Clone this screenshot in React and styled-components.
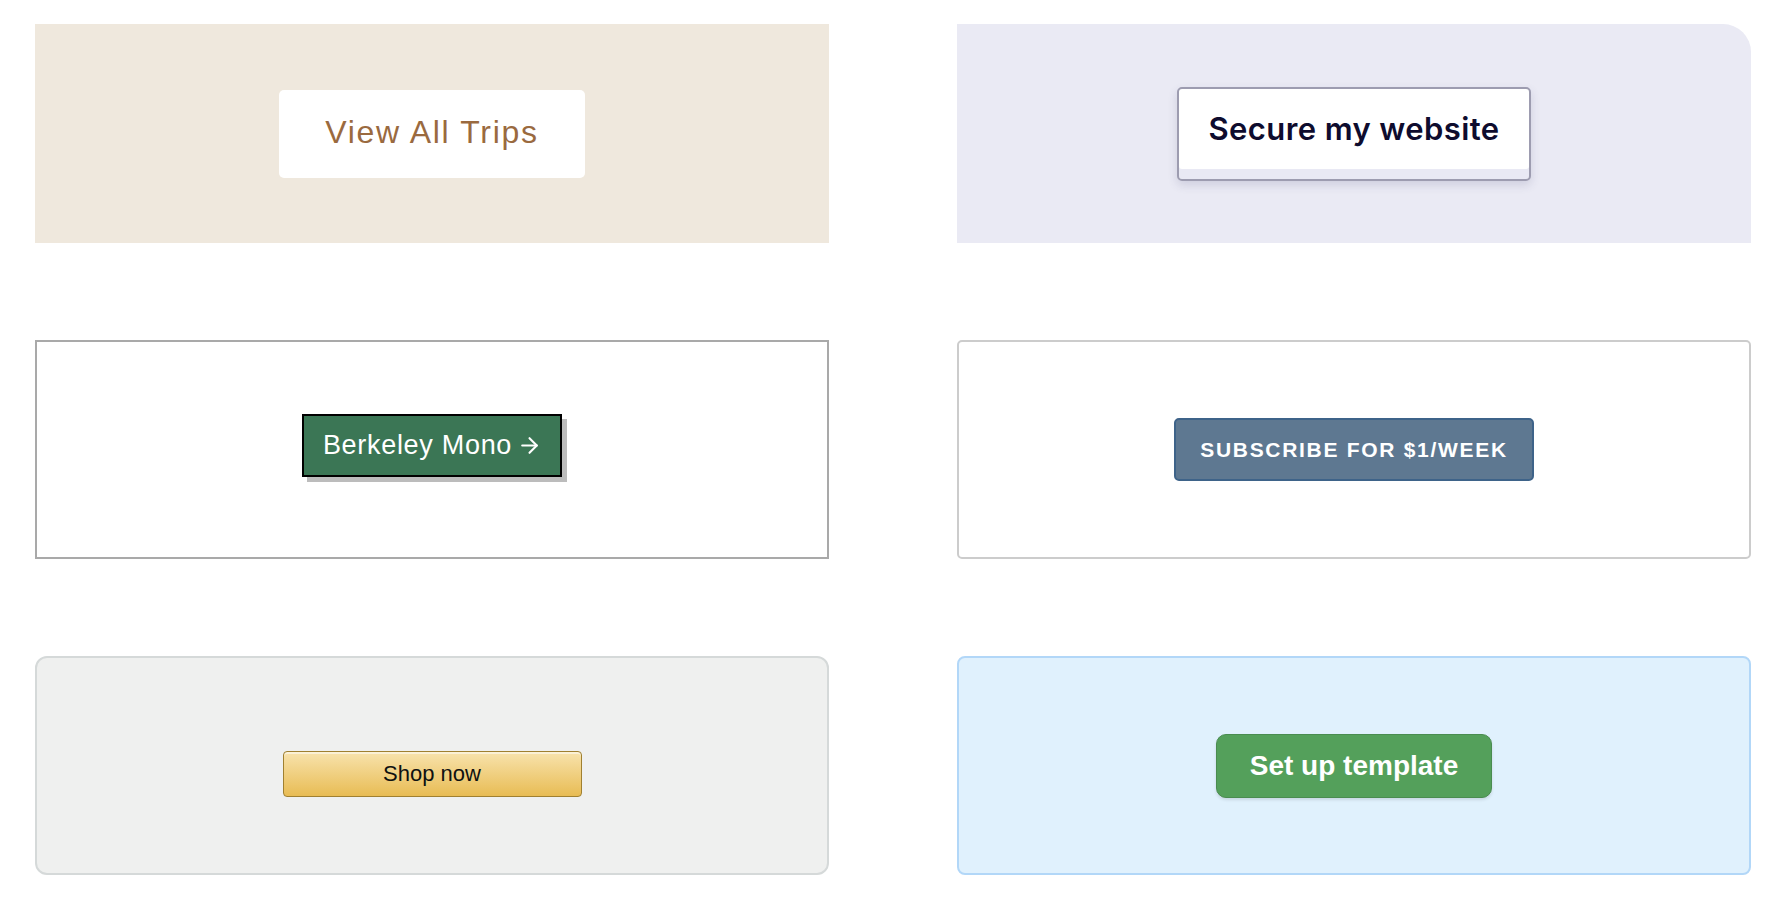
import React from 'react'
import styled, { createGlobalStyle } from 'styled-components'
import { ArrowRight } from 'lucide-react'

const GlobalStyle = createGlobalStyle`
  html, body {
    margin: 0;
    padding: 0;
    background: #fff;
  }
  body {
    font-family: 'Liberation Sans', Arial, sans-serif;
  }
`

/* Page grid */
const Page = styled.div`
  display: grid;
  grid-template-columns: 794px 794px;
  grid-auto-rows: 219px;
  column-gap: 128px;
  row-gap: 97px;
  padding: 24px 0 0 35px;
`

const Card = styled.div`
  box-sizing: border-box;
  display: flex;
  justify-content: center;
  align-items: center;
  background: ${p => p.$bg || '#fff'};
  border: ${p => p.$border ? `2px solid ${p.$border}` : 'none'};
  border-radius: ${p => p.$radius || '0'};
`

/* Buttons */
const TripsBtn = styled.button`
  font-family: 'Liberation Sans', Arial, sans-serif;
  font-size: 32px;
  line-height: 32px;
  font-weight: 400;
  letter-spacing: 1.7px;
  color: #9a6a3f;
  background: #fff;
  border: none;
  border-radius: 5px;
  padding: 26px 46px 30px;
  cursor: pointer;
`

const SecureBtn = styled.button`
  font-family: Inter, 'Liberation Sans', sans-serif;
  font-size: 31px;
  line-height: 30px;
  font-weight: 600;
  letter-spacing: 0.4px;
  color: #0e0c2e;
  background: #fff;
  border: 2px solid #9d9cb0;
  border-radius: 5px;
  padding: 25px 30px 35px;
  box-shadow: inset 0 -10px 0 #e9e9f4, 0 4px 10px rgba(60, 60, 110, 0.16);
  cursor: pointer;
`

const MonoBtn = styled.button`
  display: inline-flex;
  align-items: center;
  gap: 5px;
  font-family: 'Liberation Sans', Arial, sans-serif;
  font-size: 27px;
  line-height: 33px;
  letter-spacing: 0.7px;
  color: #fff;
  background: #3b7655;
  border: 2px solid #000;
  border-radius: 0;
  padding: 13px 18px 13px 19px;
  margin-bottom: 8px;
  box-shadow: 5px 5px 0 #bcbcbc;
  cursor: pointer;
`

const SubscribeBtn = styled.button`
  font-family: 'Liberation Sans', Arial, sans-serif;
  font-size: 21px;
  line-height: 23px;
  font-weight: 700;
  letter-spacing: 1.7px;
  text-transform: uppercase;
  color: #fff;
  background: #5e7891;
  border: 2px solid #3e6389;
  border-radius: 5px;
  padding: 18px 24px;
  cursor: pointer;
`

const ShopBtn = styled.button`
  font-family: 'Liberation Sans', Arial, sans-serif;
  font-size: 22px;
  line-height: 24px;
  color: #0f1111;
  width: 299px;
  height: 46px;
  margin-top: 16px;
  background: linear-gradient(to bottom, #f8e3ad, #e8bc54);
  border: 1px solid #a08030;
  border-radius: 4px;
  box-shadow: inset 0 2px 0 rgba(255, 255, 255, 0.5);
  cursor: pointer;
`

const TemplateBtn = styled.button`
  font-family: 'Liberation Sans', Arial, sans-serif;
  font-size: 28px;
  line-height: 32px;
  font-weight: 700;
  color: #fff;
  background: #54a05b;
  border: 1px solid #4a8c50;
  border-radius: 10px;
  padding: 15px 33px;
  box-shadow: 0 2px 3px rgba(27, 31, 35, 0.12);
  cursor: pointer;
`

const App = () => {
  return (
    <>
      <GlobalStyle />
      <Page>
        <Card $bg="#efe8dd">
          <TripsBtn>View All Trips</TripsBtn>
        </Card>
        <Card $bg="#eaeaf4" $radius="0 28px 0 0">
          <SecureBtn>Secure my website</SecureBtn>
        </Card>
        <Card $border="#a9a9a9">
          <MonoBtn>
            Berkeley Mono
            <ArrowRight size={25} strokeWidth={2} />
          </MonoBtn>
        </Card>
        <Card $border="#cccccc" $radius="5px">
          <SubscribeBtn>Subscribe for $1/week</SubscribeBtn>
        </Card>
        <Card $bg="#eff0ef" $border="#d5d9d9" $radius="12px">
          <ShopBtn>Shop now</ShopBtn>
        </Card>
        <Card $bg="#e0f1fd" $border="#b2d7f8" $radius="8px">
          <TemplateBtn>Set up template</TemplateBtn>
        </Card>
      </Page>
    </>
  )
}

export default App
